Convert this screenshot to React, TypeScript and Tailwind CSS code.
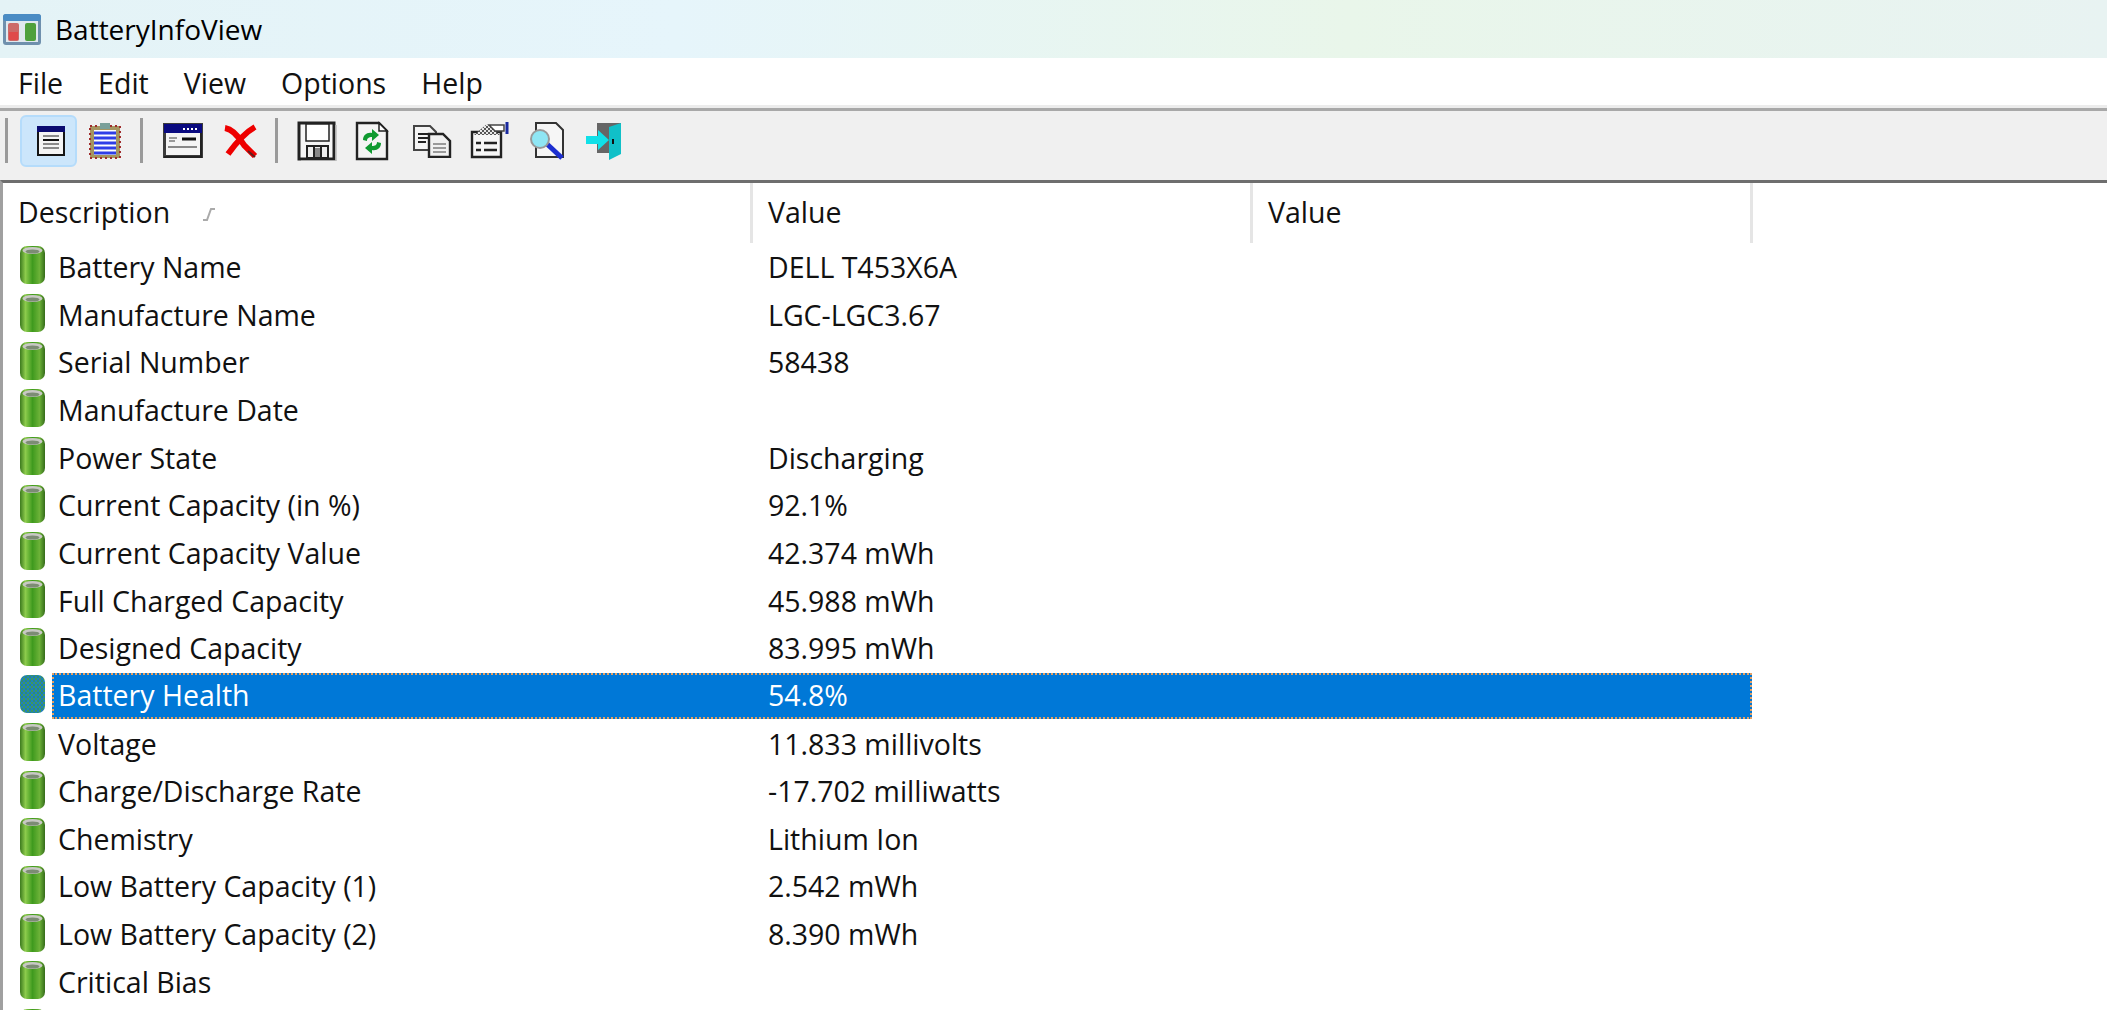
const rows: [string, string][] = [
  ["Battery Name", "DELL T453X6A"],
  ["Manufacture Name", "LGC-LGC3.67"],
  ["Serial Number", "58438"],
  ["Manufacture Date", ""],
  ["Power State", "Discharging"],
  ["Current Capacity (in %)", "92.1%"],
  ["Current Capacity Value", "42.374 mWh"],
  ["Full Charged Capacity", "45.988 mWh"],
  ["Designed Capacity", "83.995 mWh"],
  ["Battery Health", "54.8%"],
  ["Voltage", "11.833 millivolts"],
  ["Charge/Discharge Rate", "-17.702 milliwatts"],
  ["Chemistry", "Lithium Ion"],
  ["Low Battery Capacity (1)", "2.542 mWh"],
  ["Low Battery Capacity (2)", "8.390 mWh"],
  ["Critical Bias", ""],
  ["", ""],
];

function BatteryIcon({ selected }: { selected?: boolean }) {
  return (
    <svg width="27" height="40" viewBox="0 0 27 40" className="shrink-0 blur-[0.6px]">
      <defs>
        <linearGradient id="cell" x1="0" x2="1" y1="0" y2="0">
          <stop offset="0" stopColor="#3c7a1e" />
          <stop offset="0.22" stopColor="#8ccb4c" />
          <stop offset="0.5" stopColor="#3f9a1e" />
          <stop offset="0.78" stopColor="#6cb238" />
          <stop offset="1" stopColor="#356c1a" />
        </linearGradient>
        <pattern id="dots" width="4" height="4" patternUnits="userSpaceOnUse">
          <rect width="4" height="4" fill="#1f7fc0" />
          <rect width="2" height="2" fill="#3f9a5a" />
          <rect x="2" y="2" width="2" height="2" fill="#2f8f70" />
        </pattern>
      </defs>
      <rect x="1" y="1" width="25" height="38" rx="7" fill={selected ? "url(#dots)" : "url(#cell)"} />
      {!selected && <ellipse cx="13.5" cy="5.5" rx="10" ry="3.5" fill="#c8c8c4" />}
      {!selected && <ellipse cx="13.5" cy="6.5" rx="7" ry="2" fill="#7c8c74" />}
    </svg>
  );
}

function AppIcon() {
  return (
    <svg width="40" height="33" viewBox="0 0 40 33" className="blur-[0.6px]">
      <rect x="1" y="1" width="38" height="31" rx="3" fill="#6f90ad" />
      <rect x="1" y="1" width="38" height="7" rx="3" fill="#4a8cc4" />
      <rect x="4" y="8" width="32" height="21" fill="#dfe8ee" />
      <rect x="6" y="10" width="11" height="18" rx="2" fill="#cc6a68" />
      <rect x="7" y="19" width="9" height="8" fill="#e04a4a" />
      <rect x="23" y="10" width="11" height="18" rx="2" fill="#4fa03c" />
    </svg>
  );
}

function ViewIcon() {
  return (
    <svg width="28" height="30" viewBox="0 0 28 30" className="blur-[0.5px]">
      <rect x="1" y="1" width="26" height="28" fill="#f4f4f4" stroke="#151515" strokeWidth="2" />
      <rect x="0" y="0" width="28" height="6" fill="#0a0a70" />
      <path d="M6 10h16M6 18h16M6 22h16" stroke="#8a8a8a" strokeWidth="2" />
      <path d="M6 14h16" stroke="#111" strokeWidth="2" />
    </svg>
  );
}

function ClipboardIcon() {
  return (
    <svg width="32" height="36" viewBox="0 0 32 36" className="blur-[0.5px]">
      <rect x="1" y="3" width="30" height="32" fill="#a59560" />
      <rect x="1" y="3" width="30" height="32" fill="none" stroke="#a02c2c" strokeWidth="2" strokeDasharray="2 3" />
      <rect x="5" y="7" width="22" height="25" fill="#fff" />
      <path d="M5 10h22M5 15h22M5 20h22M5 25h22M5 30h22" stroke="#2f3fe8" strokeWidth="3" />
      <rect x="11" y="0" width="10" height="6" fill="#7aa09a" />
    </svg>
  );
}

function PropsWindowIcon() {
  return (
    <svg width="40" height="35" viewBox="0 0 40 35" className="blur-[0.5px]">
      <rect x="1.5" y="1.5" width="37" height="32" fill="#f4f4f4" stroke="#3c3c3c" strokeWidth="3" />
      <path d="M38 1v33H1" fill="none" stroke="#222" strokeWidth="2" />
      <rect x="1" y="1" width="38" height="9" fill="#0a0a80" />
      <path d="M20 6h2M24 6h2M28 6h2M32 6h2" stroke="#fff" strokeWidth="2" />
      <path d="M6 15h8M6 18h6" stroke="#999" strokeWidth="2" />
      <path d="M19 16h14" stroke="#111" strokeWidth="3" />
      <path d="M5 24h29" stroke="#888" strokeWidth="2" />
    </svg>
  );
}

function DeleteIcon() {
  return (
    <svg width="36" height="34" viewBox="0 0 36 34" className="blur-[0.5px]">
      <path d="M3 4c7 1 14 9 19 17l11 11" fill="none" stroke="#ee0000" strokeWidth="6" />
      <path d="M33 3C24 8 14 19 6 30" fill="none" stroke="#ee0000" strokeWidth="6" />
      <path d="M26 27l7 6" stroke="#602020" strokeWidth="2" />
    </svg>
  );
}

function SaveIcon() {
  return (
    <svg width="40" height="40" viewBox="0 0 40 40" className="blur-[0.5px]">
      <path d="M2 2h35v36H2z" fill="#f6f6f6" stroke="#222" strokeWidth="3" />
      <rect x="9" y="3" width="23" height="17" fill="#fff" stroke="#222" strokeWidth="1.5" />
      <rect x="10" y="25" width="21" height="12" fill="#eee" stroke="#222" strokeWidth="2" />
      <path d="M17 26v11M24 26v11" stroke="#222" strokeWidth="2" />
      <rect x="18" y="27" width="5" height="9" fill="#888" />
      <path d="M39 4v36H4" fill="none" stroke="#bbb" strokeWidth="1.5" />
    </svg>
  );
}

function RefreshIcon() {
  return (
    <svg width="34" height="40" viewBox="0 0 34 40" className="blur-[0.5px]">
      <path d="M2 2h22l8 8v28H2z" fill="#f4f4f4" stroke="#222" strokeWidth="2.4" />
      <path d="M24 2l8 8h-8z" fill="#fff" stroke="#222" strokeWidth="1.5" />
      <path d="M8 19c0-5 4-8 9-7V8l7 6-7 6v-4c-3 0-5 1-5 4z" fill="#0f9a30" />
      <path d="M26 22c0 5-4 8-9 7v4l-7-6 7-6v4c3 0 5-1 5-4z" fill="#0f9a30" />
    </svg>
  );
}

function CopyIcon() {
  return (
    <svg width="40" height="34" viewBox="0 0 40 34" className="blur-[0.5px]">
      <path d="M2 2h16l6 6v18H2z" fill="#f4f4f4" stroke="#444" strokeWidth="2" />
      <path d="M6 10h12M6 14h12M6 18h8" stroke="#222" strokeWidth="2" />
      <path d="M17 10h14l7 7v16H17z" fill="#f0f0f0" stroke="#222" strokeWidth="2.4" />
      <path d="M21 20h13M21 24h13M21 28h13" stroke="#999" strokeWidth="2" />
    </svg>
  );
}

function ReportIcon() {
  return (
    <svg width="40" height="37" viewBox="0 0 40 37" className="blur-[0.5px]">
      <defs>
        <pattern id="dither" width="4" height="4" patternUnits="userSpaceOnUse">
          <rect width="4" height="4" fill="#e8e8e8" />
          <rect width="2" height="2" fill="#555" />
          <rect x="2" y="2" width="2" height="2" fill="#555" />
        </pattern>
      </defs>
      <path d="M2 10h29v25H2z" fill="#f6f6f6" stroke="#222" strokeWidth="2.4" />
      <path d="M4 13l13-11 13 11z" fill="url(#dither)" />
      <path d="M19 3h15v6H25z" fill="#fff" stroke="#444" strokeWidth="1.5" />
      <path d="M37 0v12" stroke="#1a2aa0" strokeWidth="3" />
      <path d="M6 21h5M14 21h13M6 28h5M14 28h13" stroke="#222" strokeWidth="2.4" />
    </svg>
  );
}

function FindIcon() {
  return (
    <svg width="36" height="40" viewBox="0 0 36 40" className="blur-[0.5px]">
      <path d="M6 2h20l7 7v27H6z" fill="#f6f6f6" stroke="#333" strokeWidth="2" />
      <path d="M17 23l15 14" stroke="#1d2fd0" strokeWidth="5" />
      <circle cx="10" cy="18" r="9" fill="#8fe6f4" stroke="#999" strokeWidth="2" />
    </svg>
  );
}

function ExitIcon() {
  return (
    <svg width="40" height="38" viewBox="0 0 40 38" className="blur-[0.5px]">
      <rect x="12" y="1" width="24" height="30" fill="#666" />
      <path d="M24 5l12-4v31l-12 6z" fill="#10c0c8" />
      <path d="M1 14h12V8l11 10-11 10v-6H1z" fill="#10e0e8" />
      <rect x="27" y="17" width="2" height="5" fill="#111" />
    </svg>
  );
}

function Sep() {
  return <div className="h-[45px] w-[3px] shrink-0 bg-[#9a9a9a]" />;
}

export default function App() {
  return (
    <div
      className="flex h-[1010px] w-[2107px] flex-col overflow-hidden bg-white text-[#111]"
      style={{ fontFamily: '"Open Sans", "Noto Sans", sans-serif' }}
    >
      <div className="flex h-[58px] items-center gap-[13px] bg-[linear-gradient(90deg,#e4f3f6_0%,#e6f5fb_32%,#e9f6ea_64%,#e8f3f2_100%)] pl-[2px]">
        <AppIcon />
        <span className="text-[28px] text-black">BatteryInfoView</span>
      </div>

      <div className="flex h-[50px] items-center gap-[35px] border-b-[3px] border-[#ececec] pl-[18px] pt-[3px] text-[28.5px]">
        <span>File</span>
        <span>Edit</span>
        <span>View</span>
        <span>Options</span>
        <span>Help</span>
      </div>

      <div className="flex h-[72px] items-center border-t-[3px] border-[#a8a8a8] bg-[#f0f0f0] pb-[10px] pl-[5px]">
        <Sep />
        <div className="ml-[12px] flex h-[52px] w-[57px] items-center justify-center rounded-[6px] border-2 border-[#b5dcfb] bg-[#cce6fb] pl-[4px]">
          <ViewIcon />
        </div>
        <div className="ml-[12px]"><ClipboardIcon /></div>
        <div className="ml-[19px]"><Sep /></div>
        <div className="ml-[20px]"><PropsWindowIcon /></div>
        <div className="ml-[19px]"><DeleteIcon /></div>
        <div className="ml-[17px]"><Sep /></div>
        <div className="ml-[19px]"><SaveIcon /></div>
        <div className="ml-[18px]"><RefreshIcon /></div>
        <div className="ml-[23px]"><CopyIcon /></div>
        <div className="ml-[18px]"><ReportIcon /></div>
        <div className="ml-[20px]"><FindIcon /></div>
        <div className="ml-[19px]"><ExitIcon /></div>
      </div>

      <div className="flex-1 overflow-hidden border-l-[3px] border-t-[3px] border-l-[#a0a0a0] border-t-[#6e6e6e]">
        <div className="flex h-[60px] text-[28.5px]">
          <div className="flex w-[750px] items-center border-r-[3px] border-[#e5e5e5] pb-[2px] pl-[15px]">
            Description
            <svg width="14" height="16" viewBox="0 0 14 16" className="ml-[32px] mt-[4px]">
              <path d="M1 14h4l4-11h4" fill="none" stroke="#aaa" strokeWidth="2" />
            </svg>
          </div>
          <div className="flex w-[500px] items-center border-r-[3px] border-[#e5e5e5] pb-[2px] pl-[15px]">Value</div>
          <div className="flex w-[500px] items-center border-r-[3px] border-[#e5e5e5] pb-[2px] pl-[15px]">Value</div>
        </div>
        {rows.map(([name, value], i) => {
          const selected = name === "Battery Health";
          return (
            <div key={i} className="flex h-[47.67px] items-center text-[28.5px]">
              <div className="mb-[3px] flex w-[49px] shrink-0 justify-center pl-[9px]">
                <BatteryIcon selected={selected} />
              </div>
              <div
                className={
                  selected
                    ? "flex h-[46px] w-[1700px] items-center border-2 border-dotted border-[#e8a060] bg-[#0078d7] text-white"
                    : "flex w-[1700px] items-center pt-[1px]"
                }
              >
                <span className={selected ? "w-[699px] pl-[4px]" : "w-[701px] pl-[6px]"}>{name}</span>
                <span className="pl-[15px]">{value}</span>
              </div>
            </div>
          );
        })}
      </div>
    </div>
  );
}
